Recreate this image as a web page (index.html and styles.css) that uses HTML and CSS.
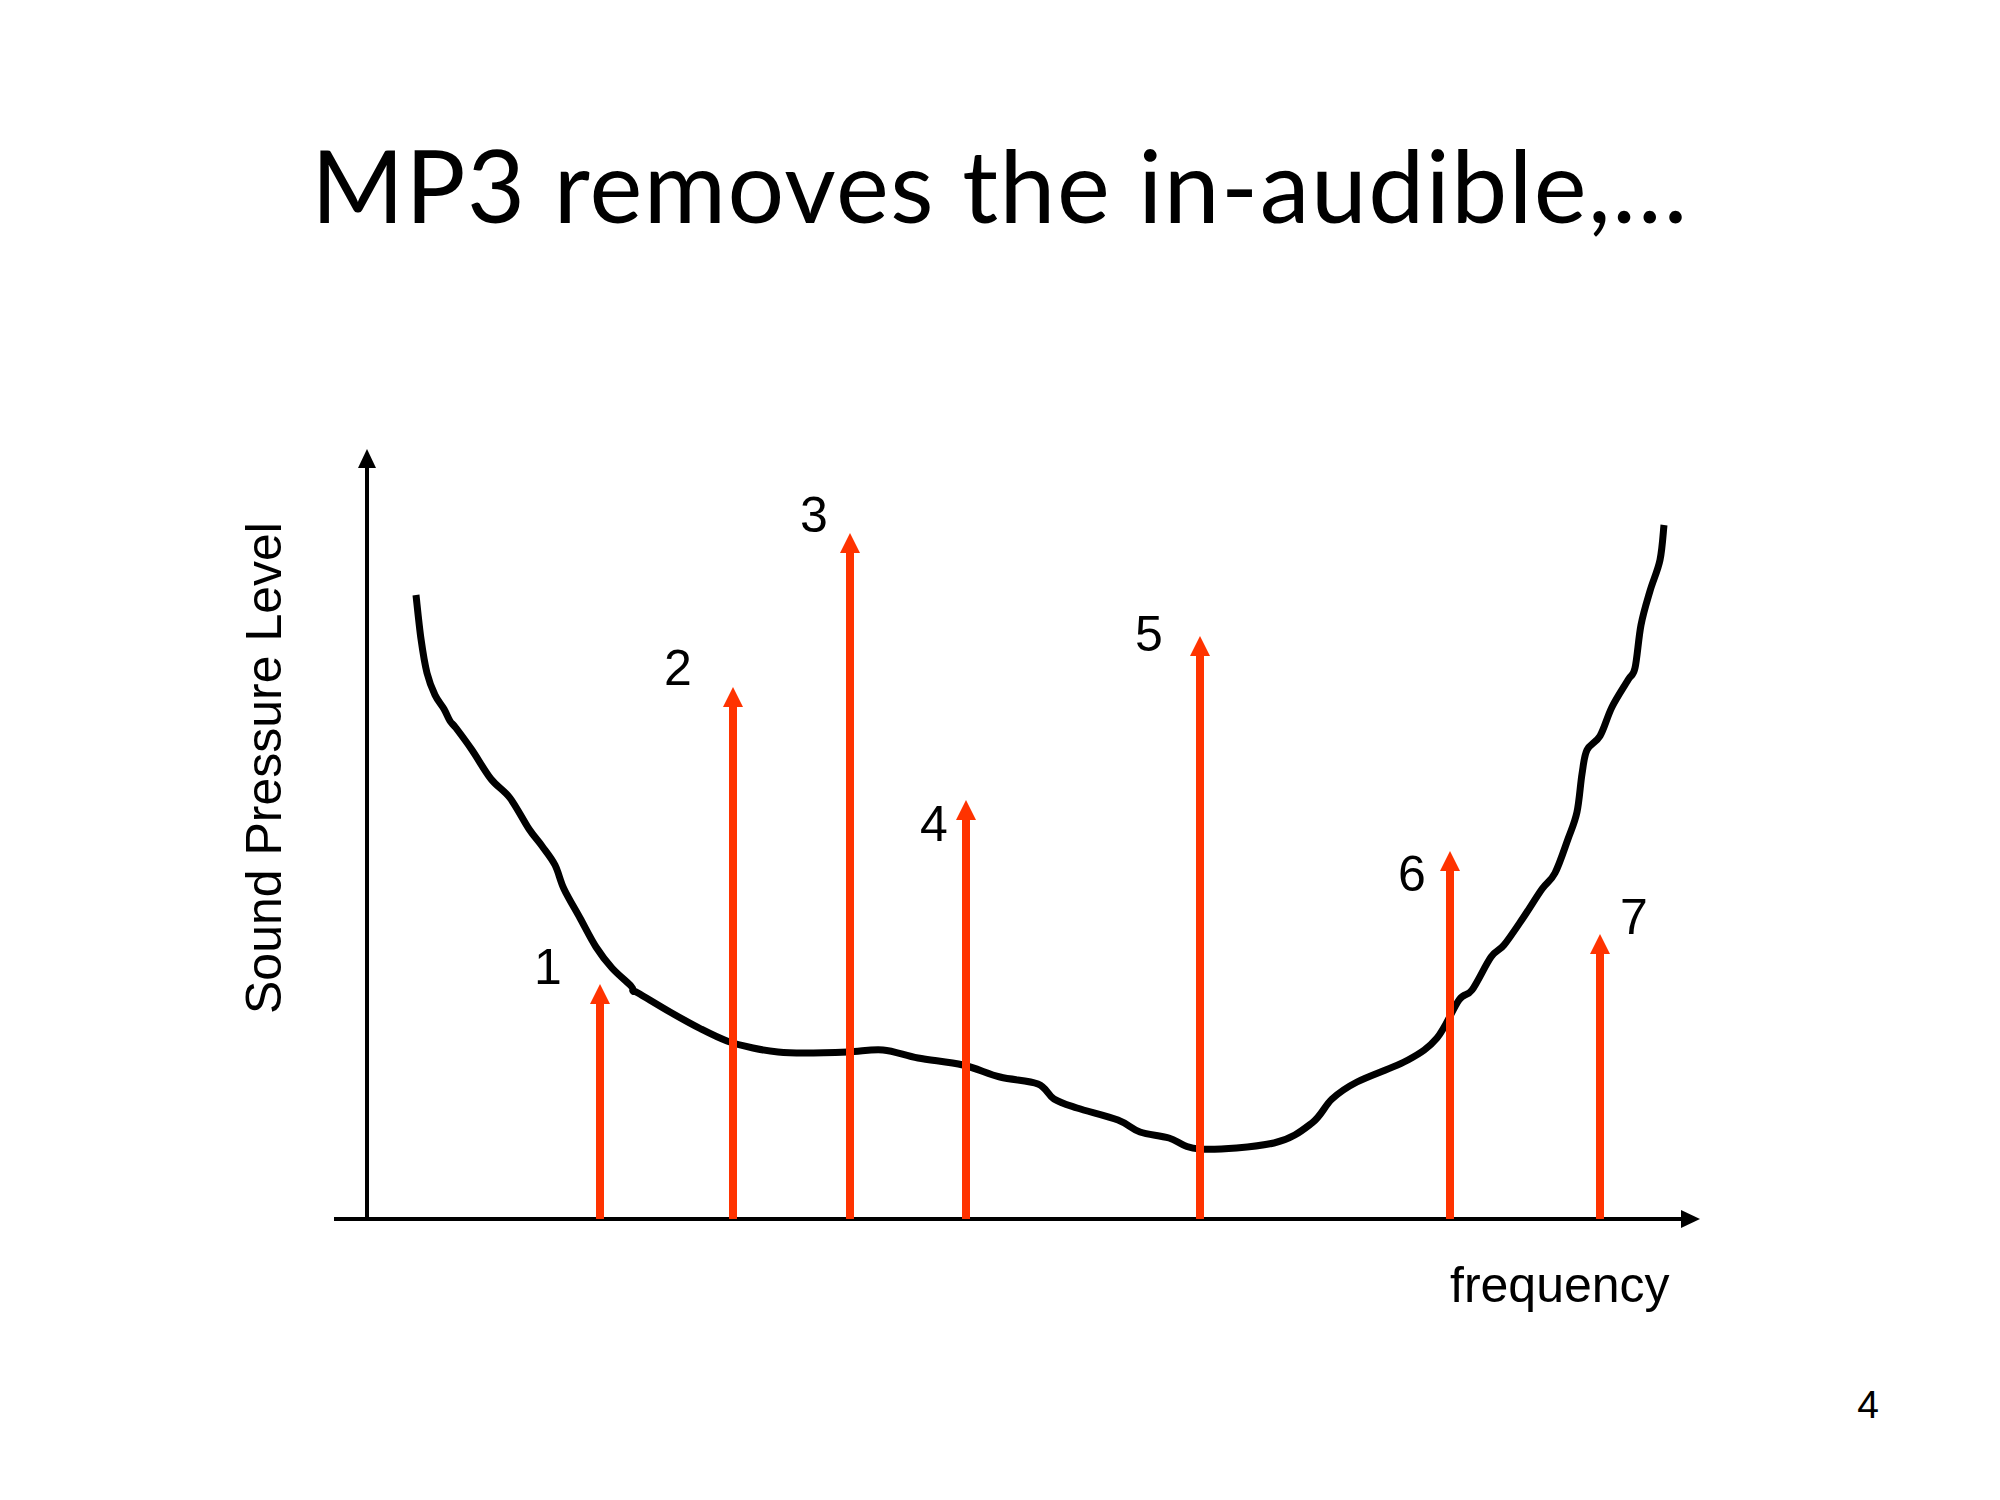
FILE: index.html
```html
<!DOCTYPE html>
<html lang="en">
<head>
<meta charset="utf-8">
<title>MP3 removes the in-audible</title>
<link rel="stylesheet" href="styles.css">
</head>
<body>
<div class="slide">
  <h1 class="title">MP3 removes the in-audible,…</h1>
  <svg class="chart" width="2000" height="1106" viewBox="0 234 2000 1106" xmlns="http://www.w3.org/2000/svg">
    <!-- axes -->
    <line class="axis" x1="367" y1="1219" x2="367" y2="466"/>
    <polygon class="axis-head" points="367,449 358,468 376,468"/>
    <line class="axis" x1="334" y1="1219" x2="1684" y2="1219"/>
    <polygon class="axis-head" points="1700,1219 1681,1210 1681,1228"/>

    <!-- threshold curve -->
    <polyline class="curve" points="416,595 421,639 427,673 435,695 444,709 450,721 456,728 472,750 491,779 510,798 529,829 542,846 555,865 564,889 580,918 596,947 612,968 631,986 633,991 638,993 670,1012 701,1029 727,1041 753,1048 778,1052 804,1053 848,1052 883,1050 918,1058 963,1065 1000,1077 1038,1084 1054,1099 1077,1108 1118,1120 1140,1132 1169,1138 1200,1149 1274,1143 1312,1123 1332,1099 1357,1082 1408,1060 1437,1038 1459,1000 1472,990 1491,957 1504,945 1523,918 1542,889 1555,873 1568,839 1577,812 1582,774 1587,750 1600,736 1612,707 1628,680 1635,668 1641,625 1650,591 1660,560 1664,525"/>

    <!-- tones -->
    <g class="tone">
      <line x1="600" y1="1219" x2="600" y2="1000"/>
      <polygon points="600,984 590,1004 610,1004"/>
    </g>
    <g class="tone">
      <line x1="733" y1="1219" x2="733" y2="703"/>
      <polygon points="733,687 723,707 743,707"/>
    </g>
    <g class="tone">
      <line x1="850" y1="1219" x2="850" y2="549"/>
      <polygon points="850,533 840,553 860,553"/>
    </g>
    <g class="tone">
      <line x1="966" y1="1219" x2="966" y2="816"/>
      <polygon points="966,800 956,820 976,820"/>
    </g>
    <g class="tone">
      <line x1="1200" y1="1219" x2="1200" y2="652"/>
      <polygon points="1200,636 1190,656 1210,656"/>
    </g>
    <g class="tone">
      <line x1="1450" y1="1219" x2="1450" y2="867"/>
      <polygon points="1450,851 1440,871 1460,871"/>
    </g>
    <g class="tone">
      <line x1="1600" y1="1219" x2="1600" y2="950"/>
      <polygon points="1600,934 1590,954 1610,954"/>
    </g>

    <!-- labels -->
    <text class="lbl" x="534" y="984">1</text>
    <text class="lbl" x="664" y="685">2</text>
    <text class="lbl" x="800" y="532">3</text>
    <text class="lbl" x="920" y="841">4</text>
    <text class="lbl" x="1135" y="651">5</text>
    <text class="lbl" x="1398" y="891">6</text>
    <text class="lbl" x="1620" y="934">7</text>

    <text class="lbl" x="1450" y="1302">frequency</text>
    <text class="lbl" transform="translate(281,1014) rotate(-90)" x="0" y="0">Sound Pressure Level</text>
  </svg>
  <div class="footer"><span class="page-num">4</span></div>
</div>
<script src="script.js"></script>
</body>
</html>
```

FILE: styles.css
```css
html, body {
  margin: 0;
  padding: 0;
  background: #ffffff;
}

.slide {
  width: 2000px;
  height: 1500px;
  display: flex;
  flex-direction: column;
  overflow: hidden;
  background: #ffffff;
}

.title {
  margin: 0;
  padding-top: 134px;
  height: 100px;
  font-family: Lato, "Open Sans", sans-serif;
  font-weight: 400;
  font-size: 100px;
  letter-spacing: 1.5px;
  line-height: 1;
  text-align: center;
  color: #000000;
  white-space: nowrap;
}

.chart {
  display: block;
  flex: none;
}

.axis {
  stroke: #000000;
  stroke-width: 4;
}

.axis-head {
  fill: #000000;
}

.curve {
  fill: none;
  stroke: #000000;
  stroke-width: 7;
  stroke-linejoin: round;
  stroke-linecap: butt;
}

.tone line {
  stroke: #ff3300;
  stroke-width: 8;
}

.tone polygon {
  fill: #ff3300;
}

.lbl {
  font-family: "Liberation Sans", Arial, sans-serif;
  font-size: 50px;
  fill: #000000;
}

.footer {
  display: flex;
  justify-content: flex-end;
  padding: 45px 121px 0 0;
}

.page-num {
  font-family: "Liberation Sans", Arial, sans-serif;
  font-size: 39px;
  line-height: 1;
  color: #000000;
}
```

FILE: script.js
```js
// Turn the sampled threshold curve into a smooth Catmull-Rom spline.
(function () {
  var NS = "http://www.w3.org/2000/svg";
  var lines = document.querySelectorAll("polyline.curve");
  Array.prototype.forEach.call(lines, function (pl) {
    var pts = pl.getAttribute("points").trim().split(/\s+/).map(function (s) {
      return s.split(",").map(Number);
    });
    if (pts.length < 3) return;
    var d = "M" + pts[0][0] + "," + pts[0][1];
    for (var i = 0; i < pts.length - 1; i++) {
      var p0 = pts[i - 1] || pts[i];
      var p1 = pts[i];
      var p2 = pts[i + 1];
      var p3 = pts[i + 2] || p2;
      var c1x = p1[0] + (p2[0] - p0[0]) / 6;
      var c1y = p1[1] + (p2[1] - p0[1]) / 6;
      var c2x = p2[0] - (p3[0] - p1[0]) / 6;
      var c2y = p2[1] - (p3[1] - p1[1]) / 6;
      d += " C" + c1x.toFixed(2) + "," + c1y.toFixed(2) + " " +
           c2x.toFixed(2) + "," + c2y.toFixed(2) + " " + p2[0] + "," + p2[1];
    }
    var path = document.createElementNS(NS, "path");
    path.setAttribute("class", "curve");
    path.setAttribute("d", d);
    pl.parentNode.replaceChild(path, pl);
  });
})();
```
